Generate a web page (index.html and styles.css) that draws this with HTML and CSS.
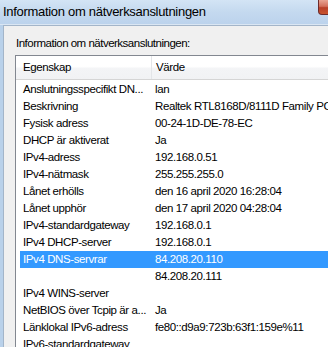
FILE: index.html
```html
<!DOCTYPE html>
<html lang="sv">
<head>
    <meta charset="UTF-8">
    <title>Information om nätverksanslutningen</title>
    <link rel="stylesheet" href="styles.css">
</head>
<body>
    <div class="window">
        <div class="titlebar">
            <span class="title">Information om nätverksanslutningen</span>
            <span class="close"></span>
        </div>
        <div class="client">
            <div class="label">Information om nätverksanslutningen:</div>
            <div class="listview">
                <div class="header">
                    <div class="col-prop">Egenskap</div>
                    <div class="col-val">Värde</div>
                </div>
                <div class="rows">
                    <div class="row"><div class="col-prop">Anslutningsspecifikt DN...</div><div class="col-val">lan</div></div>
                    <div class="row"><div class="col-prop">Beskrivning</div><div class="col-val">Realtek RTL8168D/8111D Family PCI-E Gigabit Ethernet NIC</div></div>
                    <div class="row"><div class="col-prop">Fysisk adress</div><div class="col-val">00-24-1D-DE-78-EC</div></div>
                    <div class="row"><div class="col-prop">DHCP är aktiverat</div><div class="col-val">Ja</div></div>
                    <div class="row"><div class="col-prop">IPv4-adress</div><div class="col-val">192.168.0.51</div></div>
                    <div class="row"><div class="col-prop">IPv4-nätmask</div><div class="col-val">255.255.255.0</div></div>
                    <div class="row"><div class="col-prop">Lånet erhölls</div><div class="col-val">den 16 april 2020 16:28:04</div></div>
                    <div class="row"><div class="col-prop">Lånet upphör</div><div class="col-val">den 17 april 2020 04:28:04</div></div>
                    <div class="row"><div class="col-prop">IPv4-standardgateway</div><div class="col-val">192.168.0.1</div></div>
                    <div class="row"><div class="col-prop">IPv4 DHCP-server</div><div class="col-val">192.168.0.1</div></div>
                    <div class="row selected"><div class="col-prop">IPv4 DNS-servrar</div><div class="col-val">84.208.20.110</div></div>
                    <div class="row"><div class="col-prop"></div><div class="col-val">84.208.20.111</div></div>
                    <div class="row"><div class="col-prop">IPv4 WINS-server</div><div class="col-val"></div></div>
                    <div class="row"><div class="col-prop">NetBIOS över Tcpip är a...</div><div class="col-val">Ja</div></div>
                    <div class="row"><div class="col-prop">Länklokal IPv6-adress</div><div class="col-val">fe80::d9a9:723b:63f1:159e%11</div></div>
                    <div class="row"><div class="col-prop">IPv6-standardgateway</div><div class="col-val"></div></div>
                </div>
            </div>
        </div>
    </div>
</body>
</html>
```

FILE: styles.css
```css
html, body {
    margin: 0;
    padding: 0;
}
body {
    width: 328px;
    height: 347px;
    overflow: hidden;
    font-family: "Liberation Sans", Arial, sans-serif;
    font-size: 11.5px;
    letter-spacing: -0.4px;
    color: #000;
}
.window {
    width: 328px;
    height: 347px;
    display: flex;
    flex-direction: column;
    background: #b9d1ea;
    overflow: hidden;
}
.titlebar {
    height: 24px;
    flex-shrink: 0;
    display: flex;
    align-items: flex-start;
    justify-content: space-between;
    background: linear-gradient(to bottom, #d3e4f5 0%, #c4d9ef 50%, #bcd3ec 100%);
    border-bottom: 1px solid #dae6f3;
}
.title {
    padding: 4px 0 0 3px;
    font-size: 13px;
    letter-spacing: -0.3px;
    line-height: 16px;
    color: #000;
}
.close {
    width: 43px;
    height: 15px;
    margin-right: -33px;
    flex-shrink: 0;
    box-sizing: border-box;
    border: 1px solid #6d2a2a;
    border-top: none;
    border-radius: 0 0 0 4px;
    background: linear-gradient(to bottom, #e8a493 0%, #d3705c 45%, #b83f28 55%, #c9552f 100%);
}
.client {
    flex: 1;
    min-height: 0;
    margin-left: 3px;
    border-top: 1px solid #a3b5c9;
    border-left: 1px solid #a3b5c9;
    background: #f0f0f0;
    padding: 10px 0 0 11px;
    overflow: hidden;
}
.label {
    padding-left: 1px;
    height: 19px;
    line-height: 15px;
    letter-spacing: -0.5px;
}
.listview {
    width: 340px;
    height: 400px;
    background: #fff;
    border: 1px solid #828790;
    border-right: none;
    border-bottom: none;
}
.header {
    display: flex;
    height: 23px;
    background: linear-gradient(to bottom, #ffffff 0%, #ffffff 45%, #f3f4f6 55%, #f1f2f4 100%);
    border-bottom: 1px solid #d5d5d5;
    line-height: 23px;
}
.header .col-prop {
    margin-left: 4px;
    border-right: 1px solid #e3e5e8;
}
.rows {
    padding-top: 1px;
}
.row {
    display: flex;
    height: 17px;
    line-height: 17px;
    margin-left: 4px;
}
.col-prop {
    width: 128px;
    padding-left: 3px;
    flex-shrink: 0;
    white-space: nowrap;
    overflow: hidden;
}
.col-val {
    padding-left: 4px;
    white-space: nowrap;
}
.row.selected {
    background: #3399ff;
    color: #fff;
}
```
